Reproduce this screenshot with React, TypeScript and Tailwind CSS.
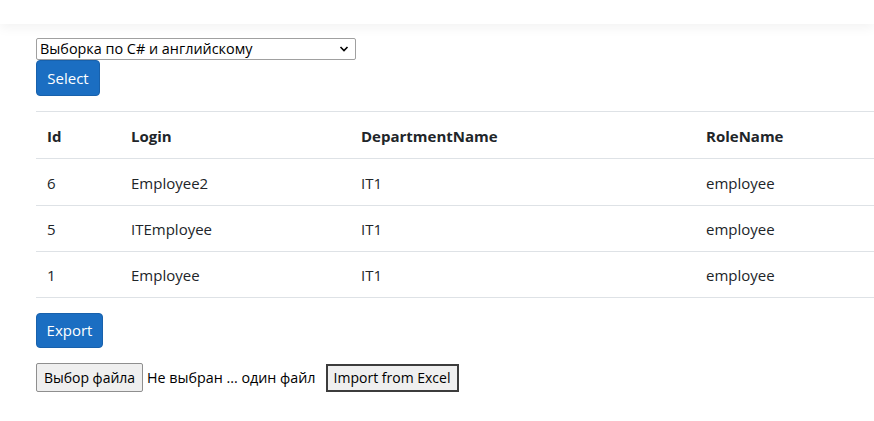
import React from "react";

const rows = [
  { id: "6", login: "Employee2", dep: "IT1", role: "employee", h: "h-[47px]" },
  { id: "5", login: "ITEmployee", dep: "IT1", role: "employee", h: "h-[46px]" },
  { id: "1", login: "Employee", dep: "IT1", role: "employee", h: "h-[46px]" },
];

export default function App() {
  return (
    <div className="min-h-[421px] w-[874px] overflow-hidden bg-white text-[#212529]" style={{ fontFamily: '"Open Sans", "Noto Sans", sans-serif' }}>
      <div className="h-[24px] bg-white shadow-[0_4px_12px_rgba(0,0,0,0.05)]" />
      <div className="pl-[36px] pt-[14px]">
        <div className="relative h-[22px] w-[320px] rounded-[2px] border border-[#a0a0a0] bg-white">
          <span className="absolute left-[3px] top-[0px] text-[14.4px] leading-[20px] text-black">Выборка по C# и английскому</span>
          <svg className="absolute right-[6px] top-[6px]" width="10" height="8" viewBox="0 0 10 8">
            <path d="M1.5 2 L5 5.5 L8.5 2" fill="none" stroke="#000" strokeWidth="1.6" />
          </svg>
        </div>
        <button className="flex h-[36px] w-[64px] items-center justify-center rounded-[4px] border border-[#1861ac] bg-[#1b6ec2] text-[15px] text-white">
          Select
        </button>
        <table className="mt-[15px] w-[900px] border-collapse text-[15px]">
          <thead>
            <tr className="border-t border-b border-[#dee2e6]">
              <th className="h-[47px] w-[84px] pl-[11px] pt-[2px] text-left font-bold">Id</th>
              <th className="w-[230px] pl-[11px] pt-[2px] text-left font-bold">Login</th>
              <th className="w-[345px] pl-[11px] pt-[2px] text-left font-bold">DepartmentName</th>
              <th className="pl-[11px] pt-[2px] text-left font-bold">RoleName</th>
            </tr>
          </thead>
          <tbody>
            {rows.map((r) => (
              <tr key={r.id} className="border-b border-[#dee2e6]">
                <td className={`${r.h} pl-[11px] pt-[2px]`}>{r.id}</td>
                <td className="pl-[11px] pt-[2px]">{r.login}</td>
                <td className="pl-[11px] pt-[2px]">{r.dep}</td>
                <td className="pl-[11px] pt-[2px]">{r.role}</td>
              </tr>
            ))}
          </tbody>
        </table>
        <button className="mt-[15px] flex h-[35px] w-[67px] items-center justify-center rounded-[4px] border border-[#1861ac] bg-[#1b6ec2] text-[15px] text-white">
          Export
        </button>
        <div className="mt-[15px] flex items-center text-[14px]">
          <button className="flex h-[29px] w-[107px] items-center justify-center rounded-[2px] border border-[#8f8f8f] bg-[#efefef] text-black">
            Выбор файла
          </button>
          <span className="ml-[4px] text-[14.3px] text-black">Не выбран ... один файл</span>
          <button className="ml-[10px] flex h-[28px] w-[133px] items-center justify-center border-2 border-[#3c3c3c] bg-[#efefef] text-black">
            Import from Excel
          </button>
        </div>
      </div>
    </div>
  );
}
